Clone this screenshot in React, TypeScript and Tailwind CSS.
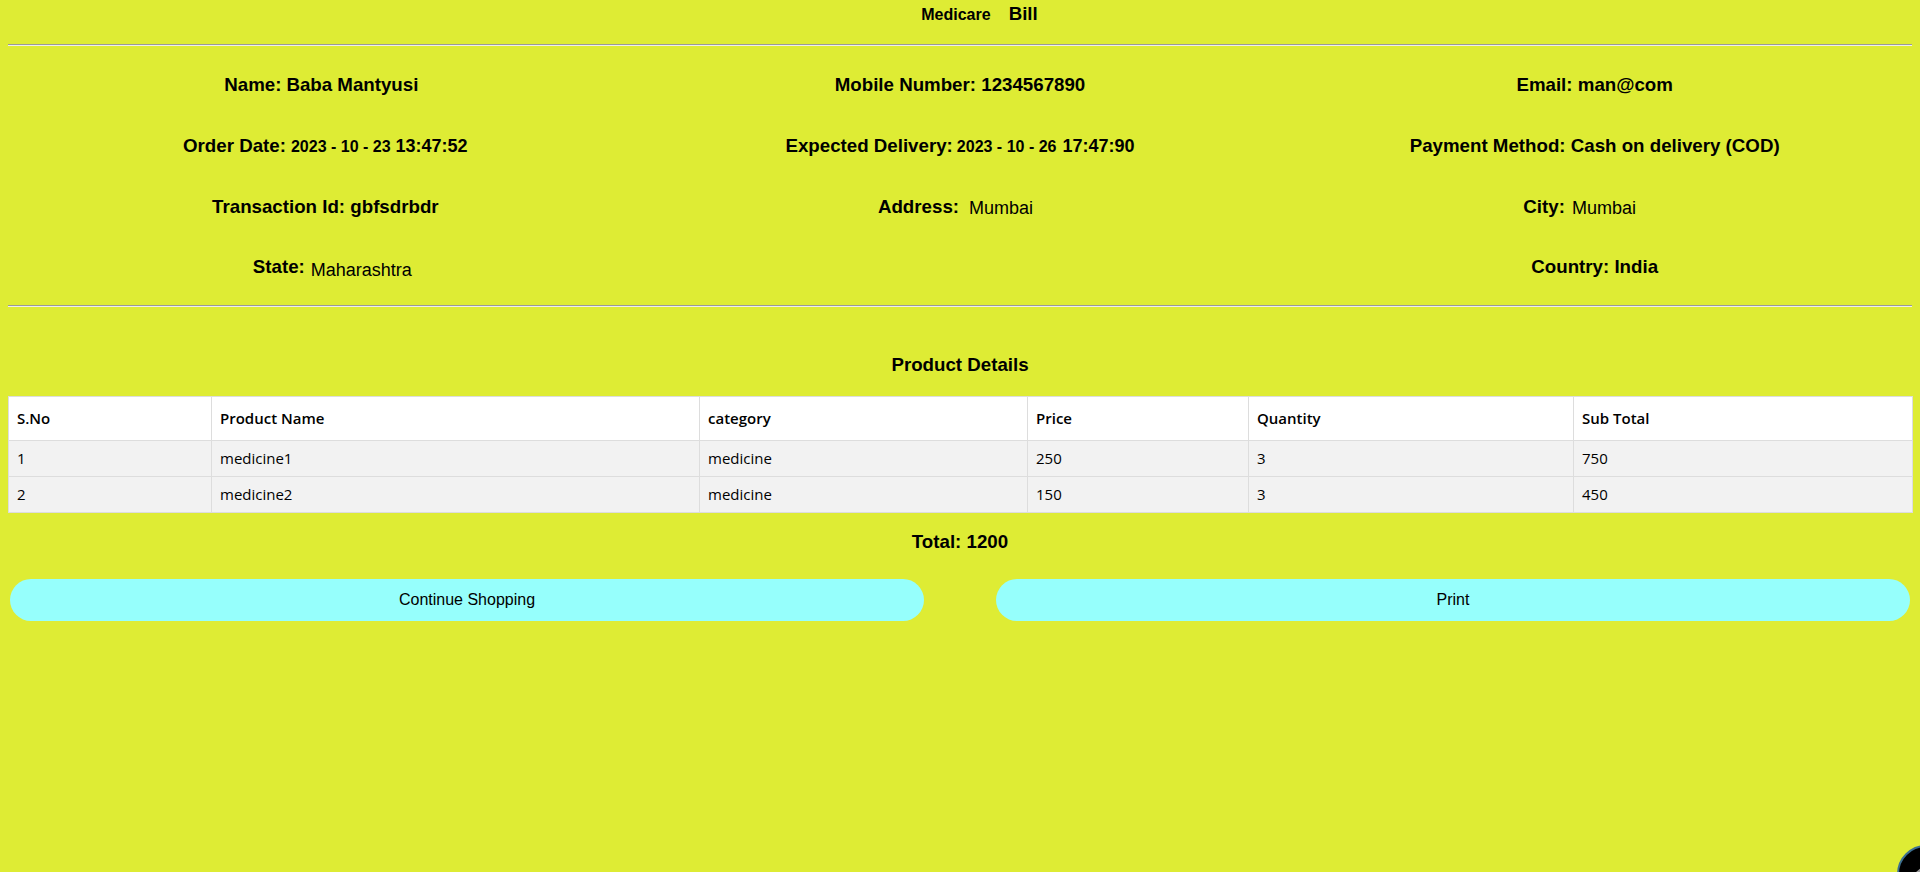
import React from "react";

const arial = { fontFamily: '"Liberation Sans", Arial, sans-serif' };

function Hr() {
  return <div className="h-0 border-t border-b border-t-[#9a9a9a] border-b-[#eeeeee]" />;
}

const rows = [
  { sno: "1", name: "medicine1", cat: "medicine", price: "250", qty: "3", sub: "750" },
  { sno: "2", name: "medicine2", cat: "medicine", price: "150", qty: "3", sub: "450" },
];

export default function App() {
  return (
    <div
      className="min-h-[872px] w-full bg-[#deec34] px-2 text-black"
      style={arial}
    >
      {/* Title */}
      <div className="flex h-[36px] items-baseline justify-center pl-[39px] pt-[5px] font-bold">
        <span className="text-[16px] leading-[16px]">Medicare</span>
        <span className="ml-[18px] text-[18.72px] leading-[18px]">Bill</span>
      </div>
      <div className="mt-[8px]">
        <Hr />
      </div>

      {/* Info grid */}
      <div className="mt-[9px] grid grid-cols-3 grid-rows-[61px_61px_60px_60px] text-[18.72px]">
        {/* Row 1 */}
        <div className="flex items-center justify-center font-bold">
          <div className="mr-[8px] flex items-baseline">
            <span>Name:</span>
            <span className="ml-[5px]">Baba Mantyusi</span>
          </div>
        </div>
        <div className="flex items-center justify-center font-bold">
          Mobile Number: 1234567890
        </div>
        <div className="flex items-center justify-center font-bold">
          Email: man@com
        </div>

        {/* Row 2 */}
        <div className="flex items-center justify-center">
          <div className="flex items-baseline font-bold">
            <span>Order Date:</span>
            <span className="ml-[5px] text-[16px]">2023 - 10 - 23</span>
            <span className="ml-[5px] text-[18px]">13:47:52</span>
          </div>
        </div>
        <div className="flex items-center justify-center">
          <div className="flex items-baseline font-bold">
            <span>Expected Delivery:</span>
            <span className="ml-[4px] text-[16px]">2023 - 10 - 26</span>
            <span className="ml-[6px] text-[18px]">17:47:90</span>
          </div>
        </div>
        <div className="flex items-center justify-center font-bold">
          Payment Method: Cash on delivery (COD)
        </div>

        {/* Row 3 */}
        <div className="flex items-center justify-center font-bold">
          Transaction Id: gbfsdrbdr
        </div>
        <div className="flex items-center justify-center">
          <div className="mr-[9px] flex items-baseline">
            <span className="font-bold">Address:</span>
            <span className="ml-[10px] translate-y-[1px] text-[18px]">Mumbai</span>
          </div>
        </div>
        <div className="flex items-center justify-center">
          <div className="mr-[30px] flex items-baseline">
            <span className="font-bold">City:</span>
            <span className="ml-[7px] translate-y-[1px] text-[18px]">Mumbai</span>
          </div>
        </div>

        {/* Row 4 */}
        <div className="flex items-center justify-center">
          <div className="ml-[14px] flex items-baseline">
            <span className="font-bold">State:</span>
            <span className="ml-[6px] translate-y-[3px] text-[18px]">Maharashtra</span>
          </div>
        </div>
        <div />
        <div className="flex items-center justify-center font-bold">
          Country: India
        </div>
      </div>

      <div className="mt-[8px]">
        <Hr />
      </div>

      {/* Product details */}
      <div className="mt-[47px] text-center text-[18.72px] font-bold leading-[22px]">
        Product Details
      </div>

      <table
        className="mt-[20px] w-full table-fixed border-collapse text-[15px]"
        style={{ fontFamily: '"Open Sans", "Noto Sans", sans-serif' }}
      >
        <colgroup>
          <col className="w-[203px]" />
          <col className="w-[488px]" />
          <col className="w-[328px]" />
          <col className="w-[221px]" />
          <col className="w-[325px]" />
          <col className="w-[339px]" />
        </colgroup>
        <thead>
          <tr className="h-[44px] bg-white text-left">
            {["S.No", "Product Name", "category", "Price", "Quantity", "Sub Total"].map((h) => (
              <th key={h} className="border border-[#dddddd] px-2 font-semibold">
                {h}
              </th>
            ))}
          </tr>
        </thead>
        <tbody>
          {rows.map((r) => (
            <tr key={r.sno} className="h-[36px] bg-[#f2f2f2]">
              {[r.sno, r.name, r.cat, r.price, r.qty, r.sub].map((c, i) => (
                <td key={i} className="border border-[#dddddd] px-2">
                  {c}
                </td>
              ))}
            </tr>
          ))}
        </tbody>
      </table>

      <div className="mt-[18px] text-center text-[18.72px] font-bold leading-[22px]">
        Total: 1200
      </div>

      <div className="mt-[26px] flex justify-between px-[2px]">
        <button className="h-[42px] w-[914px] rounded-full bg-[#96fffc] text-[16px] text-black">
          Continue Shopping
        </button>
        <button className="h-[42px] w-[914px] rounded-full bg-[#96fffc] text-[16px] text-black">
          Print
        </button>
      </div>

      {/* floating widget bottom right */}
      <div className="fixed left-[1897px] top-[845px] flex h-[58px] w-[58px] items-start justify-start rounded-full border-2 border-[#3d6f8f] bg-black">
        <svg width="14" height="14" viewBox="0 0 14 14" className="ml-[15px] mt-[18px]">
          <path d="M10 2 L4 7 L10 12" stroke="#9a9a9a" strokeWidth="2.5" fill="none" />
        </svg>
      </div>
    </div>
  );
}
